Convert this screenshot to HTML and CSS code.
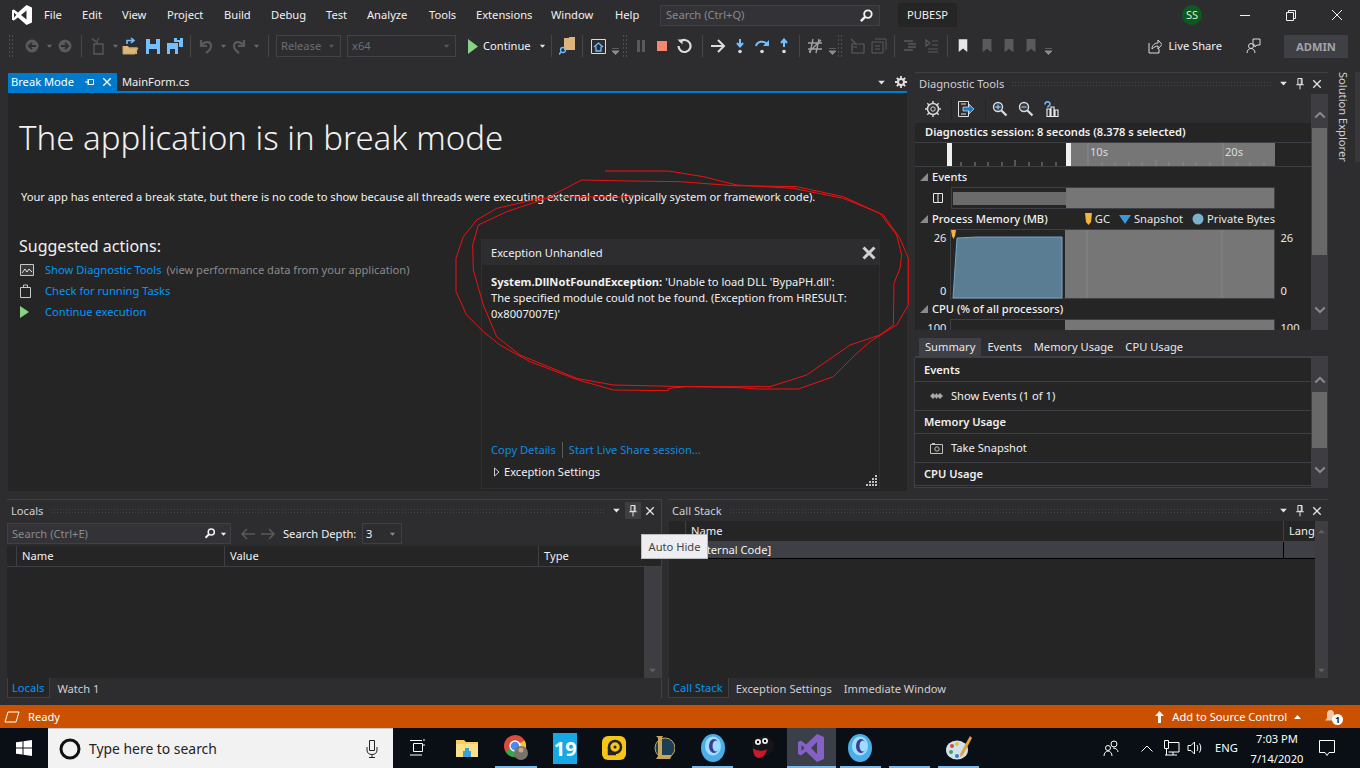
FILE: index.html
```html
<!DOCTYPE html>
<html lang="en">
<head>
    <meta charset="UTF-8">
    <title>Visual Studio - Break Mode</title>
    <link rel="stylesheet" href="styles.css">
</head>
<body>

<svg class="defs" width="0" height="0">
    <symbol id="x" viewBox="0 0 12 12"><path d="M1.5 1.5l9 9M10.5 1.5l-9 9" stroke="currentColor" stroke-width="1.6" fill="none"/></symbol>
    <symbol id="pin" viewBox="0 0 12 14"><path d="M3.5 1h5v7h-5zM1.5 8.5h9M6 9v5M7.5 1v7" stroke="currentColor" stroke-width="1.2" fill="none"/></symbol>
    <symbol id="tri" viewBox="0 0 10 6"><path d="M1 1h8L5 5.5z" fill="currentColor"/></symbol>
    <symbol id="mag" viewBox="0 0 16 16"><circle cx="9.5" cy="6.5" r="4" stroke="currentColor" stroke-width="2" fill="none"/><path d="M6.5 9.500L2 14" stroke="currentColor" stroke-width="2.6"/></symbol>
    <symbol id="step" viewBox="0 0 16 16"><circle cx="8" cy="13.5" r="1.8" fill="#dcdcdc"/><path d="M8 1v7M5 5l3 3.5L11 5" stroke="#75beff" stroke-width="2" fill="none"/></symbol>
    <symbol id="mark" viewBox="0 0 14 18"><path d="M2 1h10v15l-5-4-5 4z" fill="currentColor"/></symbol>
    <symbol id="chev" viewBox="0 0 14 9"><path d="M1.5 7.5L7 2l5.5 5.5" stroke="currentColor" stroke-width="2.4" fill="none"/></symbol>
    <symbol id="corner" viewBox="0 0 8 8"><path d="M0 8h8V0z" fill="currentColor"/></symbol>
</svg>

<header class="titlebar">
    <svg class="vs-logo" width="22" height="22" viewBox="0 0 22 22"><path d="M15.5 1L21 3.5v15L15.5 21 7 13.5 2.8 16.6 1 15.7V6.3l1.8-.9L7 8.5zM15.5 6.5L10 11l5.5 4.5zM3 8.5v5L5.4 11z" fill="#fff" fill-rule="evenodd"/></svg>
    <nav class="menu">
        <span>File</span><span>Edit</span><span>View</span><span>Project</span><span>Build</span><span>Debug</span><span>Test</span><span>Analyze</span><span>Tools</span><span>Extensions</span><span>Window</span><span>Help</span>
    </nav>
    <div class="quick-search">
        <span>Search (Ctrl+Q)</span>
        <svg width="15" height="15"><use href="#mag"/></svg>
    </div>
    <div class="sol-name">PUBESP</div>
    <div class="avatar">SS</div>
    <div class="win-btns">
        <svg width="46" height="14" viewBox="0 0 46 14"><path d="M18 7.5h10" stroke="#f1f1f1"/></svg>
        <svg width="46" height="14" viewBox="0 0 46 14"><path d="M18.5 4.5h7v8h-7zM20.5 4V2.5h7v8H26" stroke="#f1f1f1" fill="none"/></svg>
        <svg width="46" height="14" viewBox="0 0 46 14"><path d="M18 2l10 10M28 2L18 12" stroke="#f1f1f1" fill="none"/></svg>
    </div>
</header>

<div class="toolbar">
    <i class="grip"></i>
    <span class="ti m7"><svg width="16" height="16" viewBox="0 0 16 16"><circle cx="8" cy="8" r="6.5" fill="#5a5a5c"/><path d="M12 8H5M8 4.8L4.8 8 8 11.2" stroke="#2d2d30" stroke-width="1.8" fill="none"/></svg></span>
    <span class="dd"><svg width="7" height="4"><use href="#tri"/></svg></span>
    <span class="ti"><svg width="16" height="16" viewBox="0 0 16 16"><circle cx="8" cy="8" r="6.5" fill="#5a5a5c"/><path d="M4 8h7M8 4.8L11.2 8 8 11.2" stroke="#2d2d30" stroke-width="1.8" fill="none"/></svg></span>
    <i class="sep m1"></i>
    <span class="ti m1"><svg width="16" height="18" viewBox="0 0 16 18"><path d="M4 7h9v10H4zM7 7V4M4 3l2 2M2 1.5l2 2M9 1L7 4" stroke="#5a5a5c" stroke-width="1.3" fill="none"/></svg></span>
    <span class="dd"><svg width="7" height="4"><use href="#tri"/></svg></span>
    <span class="ti"><svg width="18" height="18" viewBox="0 0 18 18"><path d="M1 9h5l1 1.5h8V17H1z" fill="#dcb67a"/><path d="M1 9v8h12l3-6H7" stroke="#c8a26a" fill="none"/><path d="M5 7V3.5h6M9 1l3 2.5L9 6" stroke="#75beff" stroke-width="1.6" fill="none"/></svg></span>
    <span class="ti"><svg width="14" height="15" viewBox="0 0 14 15"><path d="M0 0h14v15H0z" fill="#75beff"/><path d="M4 0h6v5H4zM3 10h8v5H3z" fill="#2d2d30"/></svg></span>
    <span class="ti"><svg width="16" height="16" viewBox="0 0 16 16"><path d="M0 5h11v11H0z" fill="#75beff"/><path d="M3 11h5v5H3z" fill="#2d2d30"/><path d="M7 0h9v9h-4V4H7z" fill="#75beff"/><path d="M10 0h3v2h-3z" fill="#2d2d30"/></svg></span>
    <i class="sep"></i>
    <span class="ti"><svg width="16" height="18" viewBox="0 0 16 18"><path d="M3 3v6h6M3.500 8.500C6 4 13 4 13 9c0 3-2 5-5 7" stroke="#5a5a5c" stroke-width="2.200" fill="none"/></svg></span>
    <span class="dd"><svg width="7" height="4"><use href="#tri"/></svg></span>
    <span class="ti"><svg width="16" height="18" viewBox="0 0 16 18"><path d="M13 3v6H7M12.500 8.500C10 4 3 4 3 9c0 3 2 5 5 7" stroke="#5a5a5c" stroke-width="2.200" fill="none"/></svg></span>
    <span class="dd"><svg width="7" height="4"><use href="#tri"/></svg></span>
    <i class="sep m3"></i>
    <span class="combo combo-rel m3">Release<svg width="7" height="4"><use href="#tri"/></svg></span>
    <span class="combo combo-plat m6">x64<svg width="7" height="4"><use href="#tri"/></svg></span>
    <span class="ti play m7"><svg width="10" height="15" viewBox="0 0 10 15"><path d="M0 0l10 7.500L0 15z" fill="#89d185"/></svg></span>
    <span class="continue">Continue</span>
    <span class="dd m2"><svg width="7" height="4" class="lit"><use href="#tri"/></svg></span>
    <i class="sep"></i>
    <span class="ti"><svg width="16" height="18" viewBox="0 0 16 18"><path d="M5 1h5v12H5zM10 0h6v13h-6z" fill="#dcb67a"/><circle cx="4" cy="13" r="2.500" stroke="#75beff" fill="none" stroke-width="1.300"/><path d="M2 15l-2 2.500" stroke="#75beff" stroke-width="1.500"/></svg></span>
    <i class="sep"></i>
    <span class="ti"><svg width="15" height="15" viewBox="0 0 15 15"><path d="M.5.500h14v14H.500z" stroke="#dcdcdc" fill="none"/><path d="M3 8l4.500-4L12 8M5 7.500V12h5V7.500" stroke="#75beff" stroke-width="1.300" fill="none"/></svg></span>
    <span class="dd dd-bar"><svg width="7" height="7" viewBox="0 0 7 7"><path d="M0 0h7M0 3l3.500 3.500L7 3z" stroke="#8a8a8c" fill="#8a8a8c"/></svg></span>
    <i class="grip m2"></i>
    <span class="ti m2"><svg width="10" height="12"><path d="M1 0h3v12H1zM6 0h3v12H6z" fill="#5a5a5c"/></svg></span>
    <span class="ti nudge"><svg width="10" height="10"><path d="M0 0h10v10H0z" fill="#f48771"/></svg></span>
    <span class="ti"><svg width="16" height="16" viewBox="0 0 16 16"><path d="M4 4a6 6 0 1 1-1.500 4" stroke="#dcdcdc" stroke-width="2.200" fill="none"/><path d="M1.500 1.500H6.500V6.500z" fill="#dcdcdc"/></svg></span>
    <i class="sep m3"></i>
    <span class="ti"><svg width="15" height="14" viewBox="0 0 15 14"><path d="M0 7h13M7 1l6 6-6 6" stroke="#dcdcdc" stroke-width="2" fill="none"/></svg></span>
    <span class="ti"><svg width="16" height="16"><use href="#step"/></svg></span>
    <span class="ti"><svg width="16" height="16" viewBox="0 0 16 16"><circle cx="8" cy="13.500" r="1.800" fill="#dcdcdc"/><path d="M2 8a6 5 0 0 1 11-2" stroke="#75beff" stroke-width="2" fill="none"/><path d="M15 2v6H9z" fill="#75beff"/></svg></span>
    <span class="ti"><svg width="16" height="16" viewBox="0 0 16 16"><circle cx="8" cy="13.500" r="1.800" fill="#dcdcdc"/><path d="M8 9V2M5 5l3-3.500L11 5" stroke="#75beff" stroke-width="2" fill="none"/></svg></span>
    <i class="sep"></i>
    <span class="ti"><svg width="16" height="16" viewBox="0 0 16 16"><path d="M6 1L3 15M12 1L9 15M1 5h14M1 11h14M2 14L14 2" stroke="#a0a0a2" stroke-width="1.400" fill="none"/></svg></span>
    <span class="dd dd-bar"><svg width="7" height="7" viewBox="0 0 7 7"><path d="M0 0h7M0 3l3.500 3.500L7 3z" stroke="#8a8a8c" fill="#8a8a8c"/></svg></span>
    <i class="grip"></i>
    <span class="ti m3"><svg width="16" height="16" viewBox="0 0 16 16"><path d="M3 6h12v9H3zM3 9h5M2 1l5 5" stroke="#5a5a5c" fill="none" stroke-width="1.200"/></svg></span>
    <span class="ti"><svg width="16" height="16" viewBox="0 0 16 16"><path d="M4 1h11v11M1 4h11v11H1zM4 8h5M4 11h5" stroke="#5a5a5c" fill="none"/></svg></span>
    <i class="sep"></i>
    <span class="ti"><svg width="14" height="14" viewBox="0 0 14 14"><path d="M1 2h9M5 5h8M5 8h8M1 11h9" stroke="#5a5a5c" stroke-width="1.300"/></svg></span>
    <span class="ti"><svg width="14" height="14" viewBox="0 0 14 14"><path d="M1 1l4 3-4 3zM7 2h6M7 6h6M3 10h10M3 13h10" stroke="#5a5a5c" stroke-width="1.200" fill="none"/></svg></span>
    <i class="sep"></i>
    <span class="ti lit"><svg width="12" height="16"><use href="#mark"/></svg></span>
    <span class="ti m2 off"><svg width="14" height="16"><use href="#mark"/></svg></span>
    <span class="ti off"><svg width="14" height="16"><use href="#mark"/></svg></span>
    <span class="ti off"><svg width="14" height="16"><use href="#mark"/></svg></span>
    <span class="dd dd-bar"><svg width="7" height="7" viewBox="0 0 7 7"><path d="M0 0h7M0 3l3.500 3.500L7 3z" stroke="#8a8a8c" fill="#8a8a8c"/></svg></span>

    <div class="tool-right">
        <svg width="14" height="16" viewBox="0 0 14 16"><path d="M1 5v10h10v-4M4 11c0-4 3-6 6-6V2l4 4.500L10 11V8c-2 0-4 1-6 3z" stroke="#dcdcdc" fill="none"/></svg>
        <span class="live-share">Live Share</span>
        <svg class="feedback" width="15" height="16" viewBox="0 0 15 16"><path d="M7 1h7v6h-3l-2 2V7H7z" stroke="#dcdcdc" fill="none"/><circle cx="5" cy="8" r="2.500" stroke="#dcdcdc" fill="none"/><path d="M1 15c0-3 2-4.500 4-4.500S9 12 9 15" stroke="#dcdcdc" fill="none"/></svg>
        <div class="admin">ADMIN</div>
    </div>
</div>

<main class="dock">
    <div class="upper">
        <section class="doc">
            <div class="doc-tabs">
                <div class="doc-tab active">
                    <span>Break Mode</span>
                    <svg width="10" height="10" viewBox="0 0 10 10"><path d="M0 5h3M3.500 2.500v5h5v-5zM3 2v6" stroke="#fff" fill="none"/></svg>
                    <svg width="10" height="10"><use href="#x"/></svg>
                </div>
                <div class="doc-tab">MainForm.cs</div>
                <svg class="tabs-tri" width="9" height="5"><use href="#tri"/></svg>
                <svg class="tabs-gear" width="12" height="12" viewBox="0 0 12 12"><circle cx="6" cy="6" r="3" stroke="#e0e0e0" stroke-width="2" fill="none"/><path d="M6 0v2.500M6 9.500V12M0 6h2.500M9.500 6H12M1.800 1.800l1.800 1.800M8.400 8.400l1.800 1.800M10.200 1.800L8.400 3.600M3.600 8.400l-1.800 1.800" stroke="#e0e0e0" stroke-width="1.800"/></svg>
            </div>
            <div class="doc-body">
                <h1>The application is in break mode</h1>
                <p class="lead">Your app has entered a break state, but there is no code to show because all threads were executing external code (typically system or framework code).</p>
                <h2>Suggested actions:</h2>
                <ul class="actions">
                    <li><svg width="14" height="12" viewBox="0 0 14 12"><path d="M.5.500h13v11H.500z" stroke="#c8c8c8" fill="#3a3a3c"/><path d="M2 9l3-4 2 3 2-3 3 3" stroke="#e0e0e0" fill="none"/></svg><a>Show Diagnostic Tools</a><span class="hint">(view performance data from your application)</span></li>
                    <li><svg width="11" height="14" viewBox="0 0 11 14"><path d="M.5 3.500h10v10H.500zM3.500 3.500V1h4v2.500" stroke="#c8c8c8" fill="none"/></svg><a class="shift">Check for running Tasks</a></li>
                    <li><svg width="9" height="12" viewBox="0 0 9 12"><path d="M0 0l9 6-9 6z" fill="#89d185"/></svg><a class="shift2">Continue execution</a></li>
                </ul>
            </div>
            <div class="exception">
                <div class="exc-head">
                    <span>Exception Unhandled</span>
                    <svg width="14" height="14" viewBox="0 0 14 14"><path d="M1.500 1.500l11 11M12.500 1.500l-11 11" stroke="#d0d0d0" stroke-width="3"/></svg>
                </div>
                <div class="exc-msg"><b>System.DllNotFoundException:</b> 'Unable to load DLL 'BypaPH.dll':<br>The specified module could not be found. (Exception from HRESULT:<br>0x8007007E)'</div>
                <div class="exc-foot">
                    <div class="exc-links"><a>Copy Details</a><i></i><a>Start Live Share session...</a></div>
                    <div class="exc-set"><svg width="6" height="10" viewBox="0 0 6 10"><path d="M.5 1l4.500 4-4.500 4z" stroke="#d0d0d0" fill="none"/></svg>Exception Settings</div>
                </div>
                <svg class="exc-resize" width="11" height="11" viewBox="0 0 11 11"><path d="M9 0h2v2H9zM6 3h2v2H6zM9 3h2v2H9zM3 6h2v2H3zM6 6h2v2H6zM9 6h2v2H9zM0 9h2v2H0zM3 9h2v2H3zM6 9h2v2H6zM9 9h2v2H9z" fill="#c0c0c0"/></svg>
            </div>
        </section>

        <section class="diag">
            <div class="diag-top">
                <div class="pane-title">
                    <span>Diagnostic Tools</span><i class="dots"></i>
                    <svg width="9" height="5"><use href="#tri"/></svg>
                    <svg width="10" height="13"><use href="#pin"/></svg>
                    <svg width="10" height="10"><use href="#x"/></svg>
                </div>
                <div class="diag-split">
                    <div class="diag-main">
                        <div class="diag-tools">
                            <svg width="16" height="16" viewBox="0 0 16 16"><circle cx="8" cy="8" r="2.200" stroke="#d8d8d8" fill="none"/><circle cx="8" cy="8" r="5.500" stroke="#d8d8d8" stroke-width="1.500" fill="none"/><path d="M8 0v3M8 13v3M0 8h3M13 8h3M2.300 2.300l2 2M11.700 11.700l2 2M13.700 2.300l-2 2M4.300 11.700l-2 2" stroke="#d8d8d8" stroke-width="1.500"/></svg>
                            <i class="tool-sep"></i>
                            <svg width="17" height="16" viewBox="0 0 17 16"><path d="M.5.500h10v15H.500zM3 3h5M3 13h5" stroke="#e0e0e0" fill="none"/><path d="M5 6h6V3l5 5-5 5v-3H5z" fill="#1f7ac4" stroke="#e0e0e0" stroke-width=".7"/></svg>
                            <i class="tool-sep"></i>
                            <svg width="16" height="16" viewBox="0 0 16 16"><circle cx="6" cy="6" r="4.500" stroke="#dcdcdc" stroke-width="1.400" fill="#3a3a3c"/><path d="M9.500 9.500l5 5" stroke="#dcdcdc" stroke-width="2.200"/><path d="M3.500 6h5M6 3.500v5" stroke="#75beff" stroke-width="1.300"/></svg>
                            <svg class="zoom-out" width="16" height="16" viewBox="0 0 16 16"><circle cx="6" cy="6" r="4.500" stroke="#dcdcdc" stroke-width="1.400" fill="#3a3a3c"/><path d="M9.500 9.500l5 5" stroke="#dcdcdc" stroke-width="2.200"/><path d="M3.500 6h5" stroke="#75beff" stroke-width="1.300"/></svg>
                            <svg class="zoom-out" width="16" height="16" viewBox="0 0 16 16"><path d="M3 8h3v7.500H3zM7 6h3v9.500H7zM11 9h3v6.500h-3z" stroke="#e8e8e8" stroke-width="1.200" fill="none"/><path d="M1 3.500C1 0 6 0 6 3c0 2-2.500 2-2.500 3.500" stroke="#75beff" stroke-width="1.500" fill="none"/></svg>
                        </div>
                        <div class="session">Diagnostics session: 8 seconds (8.378 s selected)</div>
                        <div class="ruler">
                            <svg width="396" height="23" viewBox="0 0 396 23">
                                <rect x="151" width="209" height="23" fill="#767676"/>
                                <rect x="32" width="5" height="23" fill="#f0f0f0"/>
                                <rect x="151" width="5" height="23" fill="#f0f0f0"/>
                                <path d="M46 23v-4M60 23v-4M73 23v-4M87 23v-4M100 23v-6M114 23v-4M127 23v-4M141 23v-4M173 23v-23M187 23v-4M200 23v-4M214 23v-4M227 23v-4M241 23v-6M254 23v-4M268 23v-4M281 23v-4M295 23v-4M308 23v-23M322 23v-4M335 23v-4M349 23v-4" stroke="#888"/>
                                <text x="175" y="13" class="ruler-txt">10s</text>
                                <text x="310" y="13" class="ruler-txt">20s</text>
                            </svg>
                        </div>
                        <div class="diag-head first"><svg width="8" height="8"><use href="#corner"/></svg><b>Events</b></div>
                        <div class="diag-row events-row">
                            <svg width="10" height="10" viewBox="0 0 10 10"><path d="M.500.500h9v9h-9zM5 0v10" stroke="#e8e8e8" fill="none"/></svg>
                            <div class="events-graph"><div></div></div>
                        </div>
                        <div class="diag-head mem">
                            <svg width="8" height="8"><use href="#corner"/></svg><b>Process Memory (MB)</b>
                            <span class="legend gc"><svg width="7" height="12" viewBox="0 0 7 12"><path d="M0 0h7l-1 9-2.500 3L1 9z" fill="#f2b53c"/></svg>GC</span>
                            <span class="legend snap"><svg width="12" height="9" viewBox="0 0 12 9"><path d="M0 0h12L6 9z" fill="#3a96dd"/></svg>Snapshot</span>
                            <span class="legend priv"><svg width="12" height="12"><circle cx="6" cy="6" r="5.500" fill="#7cb1cc"/></svg>Private Bytes</span>
                        </div>
                        <div class="diag-row chart-row">
                            <div class="axis"><span>26</span><span>0</span></div>
                            <svg width="325" height="70" viewBox="0 0 325 70" class="chart">
                                <rect x=".5" y=".5" width="324" height="69" fill="#767676" stroke="#3f3f46"/>
                                <rect x="1" y="1" width="114" height="68" fill="#252526"/>
                                <path d="M3 69L7 9l20-1h85v61z" fill="#5b7d94" stroke="#74a6c4"/>
                                <path d="M1 1h5l-1 6-1.500 3L2 7z" fill="#f2b53c"/>
                                <path d="M137 1v68M272 1v68" stroke="#848484"/>
                            </svg>
                            <div class="axis right"><span>26</span><span>0</span></div>
                        </div>
                        <div class="diag-head cpu"><svg width="8" height="8"><use href="#corner"/></svg><b>CPU (% of all processors)</b></div>
                        <div class="diag-row chart-row cut">
                            <div class="axis"><span>100</span></div>
                            <svg width="325" height="20" viewBox="0 0 325 20" class="chart">
                                <rect x=".5" y=".5" width="324" height="19" fill="#767676" stroke="#3f3f46"/>
                                <rect x="1" y="1" width="114" height="19" fill="#252526"/>
                            </svg>
                            <div class="axis right"><span>100</span></div>
                        </div>
                    </div>
                    <div class="vscroll top-scroll">
                        <svg width="12" height="8"><use href="#chev"/></svg>
                        <div class="thumb"></div>
                        <svg class="down" width="12" height="8"><use href="#chev"/></svg>
                    </div>
                </div>
            </div>
            <div class="diag-tabs">
                <span class="active">Summary</span><span>Events</span><span>Memory Usage</span><span>CPU Usage</span>
            </div>
            <div class="diag-bottom">
                <div class="summary">
                    <div class="sum-head"><b>Events</b></div>
                    <div class="sum-item"><svg width="13" height="6" viewBox="0 0 13 6"><path d="M0 3l3-3 2 2 1.500-2L8 2l2-2 3 3-3 3-2-2-1.500 2L5 4 3 6z" fill="#a8a8a8"/></svg>Show Events (1 of 1)</div>
                    <div class="sum-head"><b>Memory Usage</b></div>
                    <div class="sum-item"><svg width="13" height="11" viewBox="0 0 13 11"><path d="M.500 1.500h12v9H.500z" stroke="#c0c0c0" fill="none"/><circle cx="7" cy="6" r="2.200" stroke="#c0c0c0" fill="none"/><path d="M2 0h3v1H2z" fill="#c0c0c0"/></svg>Take Snapshot</div>
                    <div class="sum-head"><b>CPU Usage</b></div>
                </div>
                <div class="vscroll low-scroll">
                    <svg width="12" height="8"><use href="#chev"/></svg>
                    <div class="thumb"></div>
                    <svg class="down" width="12" height="8"><use href="#chev"/></svg>
                </div>
            </div>
        </section>

        <aside class="sidetab"><span>Solution Explorer</span><i></i></aside>
    </div>

    <div class="lower">
        <section class="tool-pane locals">
            <div class="pane-title">
                <span>Locals</span><i class="dots"></i>
                <svg width="9" height="5"><use href="#tri"/></svg>
                <span class="pin-hover"><svg width="10" height="13"><use href="#pin"/></svg></span>
                <svg width="10" height="10"><use href="#x"/></svg>
            </div>
            <div class="locals-bar">
                <div class="loc-search">
                    <span>Search (Ctrl+E)</span>
                    <svg width="14" height="14"><use href="#mag" transform="scale(.875)"/></svg>
                    <svg class="loc-dd" width="7" height="4"><use href="#tri"/></svg>
                </div>
                <svg class="nav" width="16" height="12" viewBox="0 0 16 12"><path d="M15 6H2M7 1L2 6l5 5" stroke="#5a5a5c" stroke-width="1.500" fill="none"/></svg>
                <svg class="nav" width="16" height="12" viewBox="0 0 16 12"><path d="M1 6h13M9 1l5 5-5 5" stroke="#5a5a5c" stroke-width="1.500" fill="none"/></svg>
                <span class="depth-label">Search Depth:</span>
                <span class="depth">3<svg width="7" height="4"><use href="#tri"/></svg></span>
            </div>
            <div class="grid-head loc-cols">
                <span class="gutter"></span><span>Name</span><span>Value</span><span>Type</span>
            </div>
            <div class="grid-rest">
                <div class="grid-fill"></div>
                <div class="thin-scroll"><svg class="down dim" width="9" height="5"><use href="#tri"/></svg></div>
            </div>
            <div class="pane-tabs"><span class="active">Locals</span><span>Watch 1</span></div>
        </section>

        <section class="tool-pane stack">
            <div class="pane-title">
                <span>Call Stack</span><i class="dots"></i>
                <svg width="9" height="5"><use href="#tri"/></svg>
                <svg width="10" height="13"><use href="#pin"/></svg>
                <svg width="10" height="10"><use href="#x"/></svg>
            </div>
            <div class="stack-body">
                <div class="grid-fill">
                    <div class="grid-head stack-cols"><span class="gutter"></span><span>Name</span><span>Lang</span></div>
                    <div class="stack-row stack-cols"><span class="gutter"></span><span class="ext-name">[External Code]</span><span></span></div>
                </div>
                <div class="thin-scroll">
                    <svg class="dim up" width="9" height="5"><use href="#tri"/></svg>
                    <svg class="down dim" width="9" height="5"><use href="#tri"/></svg>
                </div>
            </div>
            <div class="pane-tabs"><span class="active">Call Stack</span><span>Exception Settings</span><span>Immediate Window</span></div>
        </section>
    </div>
</main>

<footer class="statusbar">
    <svg width="16" height="12" viewBox="0 0 16 12"><path d="M4 1h11l-3 10H1z" stroke="#fff" fill="none"/></svg>
    <span class="ready">Ready</span>
    <div class="status-right">
        <svg width="9" height="12" viewBox="0 0 9 12"><path d="M4.500 0L9 5H6v7H3V5H0z" fill="#f0f0f0"/></svg>
        <span class="src">Add to Source Control</span>
        <svg class="src-tri" width="7" height="4" viewBox="0 0 7 4"><path d="M3.500 0L7 4H0z" fill="#fff"/></svg>
        <span class="bell"><svg width="13" height="14" viewBox="0 0 13 14"><path d="M6.500 0C9 0 10 2 10 4v4l2 2.500H1L3 8V4c0-2 1-4 3.500-4z" fill="#e8c8b0"/></svg><b>1</b></span>
    </div>
</footer>

<div class="taskbar">
    <svg class="win" width="16" height="16" viewBox="0 0 16 16"><path d="M0 2.300L6.500 1.400v6.100H0zM7.500 1.300L16 0v7.500H7.500zM0 8.500h6.500v6.100L0 13.700zM7.500 8.500H16V16l-8.500-1.300z" fill="#fff"/></svg>
    <div class="task-search">
        <svg width="22" height="22" viewBox="0 0 22 22"><circle cx="11" cy="11" r="9" stroke="#111" stroke-width="3" fill="none"/></svg>
        <span>Type here to search</span>
        <svg class="mic" width="12" height="18" viewBox="0 0 12 18"><path d="M3.500.500h5v10h-5zM1 7v3c0 3 2 4.500 5 4.500s5-1.500 5-4.500V7M6 15v3M3 17.500h6" stroke="#222" fill="none"/></svg>
    </div>
    <div class="task-icons">
        <span class="app"><svg width="16" height="18" viewBox="0 0 16 18"><path d="M3.500 4.500h9v8h-9zM0 1.500h12M0 16h12M14 0v2M14 5v2" stroke="#fff" fill="none"/></svg></span>
        <span class="app"><svg width="22" height="20" viewBox="0 0 22 20"><path d="M0 2h8l2 2h12v15H0z" fill="#f4cf5f"/><path d="M0 6h22v13H0z" fill="#fbe08a"/><path d="M7 13h8v6H7z" fill="#3aa0d8"/><path d="M9 10h4v3H9z" fill="#3aa0d8"/></svg></span>
        <span class="app open"><svg width="26" height="28" viewBox="0 0 26 28"><circle cx="12" cy="12" r="11" fill="#dd4b3e"/><path d="M12 12L2.500 17.500A11 11 0 0 0 14 23z" fill="#2fa84f"/><path d="M12 12l9.500-5.500A11 11 0 0 1 14 23z" fill="#f7c52d"/><circle cx="12" cy="12" r="5" fill="#4a8bf5" stroke="#fff" stroke-width="1.500"/><circle cx="18" cy="19" r="7" fill="#77736c"/><circle cx="18" cy="16" r="2.500" fill="#c9a489"/></svg></span>
        <span class="app"><span class="nineteen">19</span></span>
        <span class="app"><svg width="24" height="24" viewBox="0 0 24 24"><rect width="24" height="24" rx="6" fill="#f5c518"/><circle cx="13" cy="11" r="6" stroke="#222" stroke-width="2.500" fill="none"/><path d="M7 11v7h7" stroke="#222" stroke-width="2.500" fill="none"/><circle cx="13" cy="11" r="1.500" fill="#222"/></svg></span>
        <span class="app"><svg width="22" height="28" viewBox="0 0 22 28"><circle cx="12" cy="14" r="10" fill="#1c3f55" stroke="#c9a65c"/><path d="M3 2h7l-1 2v17h10l-2 4H3l2-3V4z" fill="#c8a45c"/></svg></span>
        <span class="app open"><svg width="26" height="28" viewBox="0 0 26 28"><ellipse cx="13" cy="14" rx="12" ry="14" fill="#4aaee8"/><ellipse cx="13" cy="12" rx="8" ry="9.500" fill="#9fdcff"/><ellipse cx="14" cy="12" rx="5" ry="7" fill="#3a3d8f"/><ellipse cx="16" cy="12" rx="3.500" ry="5.500" fill="#9fdcff"/></svg></span>
        <span class="app"><svg width="24" height="26" viewBox="0 0 24 26"><ellipse cx="13" cy="11" rx="11" ry="10" fill="#15151a"/><circle cx="8" cy="7" r="3" fill="#eee"/><circle cx="15" cy="6" r="3" fill="#eee"/><circle cx="8" cy="7" r="1.200" fill="#000"/><circle cx="15" cy="6" r="1.200" fill="#000"/><path d="M3 13c3 3 10 4 14 1-1 5-4 9-8 9-4 0-6-4-6-10z" fill="#c8182a"/></svg></span>
        <span class="app current"><svg width="26" height="28" viewBox="0 0 26 28"><path d="M19 0l7 3v22l-7 3L8 17.500 3 21.500 0 20V8l3-1.500 5 4zM19 8l-6 6 6 6zM3.500 11v6l3-3z" fill="#8661c5" fill-rule="evenodd"/></svg></span>
        <span class="app open"><svg width="26" height="28" viewBox="0 0 26 28"><ellipse cx="13" cy="14" rx="12" ry="14" fill="#4aaee8"/><ellipse cx="13" cy="12" rx="8" ry="9.500" fill="#9fdcff"/><ellipse cx="14" cy="12" rx="5" ry="7" fill="#3a3d8f"/><ellipse cx="16" cy="12" rx="3.500" ry="5.500" fill="#9fdcff"/></svg></span>
        <span class="app open"></span>
        <span class="app open"><svg width="26" height="26" viewBox="0 0 26 26"><ellipse cx="11" cy="15" rx="11" ry="9.500" fill="#cfe3ee"/><circle cx="6" cy="11" r="2" fill="#d84a3a"/><circle cx="11" cy="9" r="2" fill="#e8c040"/><circle cx="5" cy="17" r="2" fill="#46a050"/><circle cx="11" cy="21" r="2" fill="#3a78c8"/><path d="M24 1l2 2-9 17-3 2 .5-4z" fill="#e8a040"/></svg></span>
    </div>
    <div class="tray">
        <svg width="16" height="16" viewBox="0 0 16 16"><circle cx="11" cy="4" r="3" stroke="#fff" fill="none"/><circle cx="5" cy="8" r="2.500" stroke="#fff" fill="none"/><path d="M1 16c0-3 2-5 4-5s4 2 4 5M10 8c3 0 5 2 5 4" stroke="#fff" fill="none"/></svg>
        <svg class="t-chev" width="12" height="7" viewBox="0 0 12 7"><path d="M.500 6.500L6 1l5.500 5.500" stroke="#fff" fill="none"/></svg>
        <svg class="t-net" width="16" height="16" viewBox="0 0 16 16"><path d="M4.500 2.500H15V12H4.500M.500.500h4v8h-4zM2.500 8.500V15M1 15h12M9 12v3" stroke="#fff" fill="none"/></svg>
        <svg class="t-vol" width="16" height="16" viewBox="0 0 16 16"><path d="M1 5.500h3L7.500 2v12L4 10.500H1zM10 5c1 2 1 4 0 6M12.500 3.500c1.700 3 1.700 6 0 9" stroke="#fff" fill="none"/></svg>
        <span class="lang">ENG</span>
        <div class="clock"><span>7:03 PM</span><span>7/14/2020</span></div>
        <svg class="t-note" width="16" height="17" viewBox="0 0 16 17"><path d="M.500.500h15v12H10l-2 3-2-3H.500z" stroke="#fff" fill="none"/></svg>
    </div>
</div>

<svg class="scribble" width="470" height="330" viewBox="0 0 1410 990">
    <path d="M555 90L520 96 400 95 270 100 140 130 80 165 40 215 18 280 18 380 50 450 100 500 150 540 240 590 385 645 490 675 655 677 655 670 710 665 870 668 920 672 1045 672 1150 635 1215 570 1260 530 1340 480 1375 420 1375 280 1350 220 1300 150 1180 95 1040 65 850 62 690 50 540 48 395 45 290 100"/>
    <path d="M465 18L655 18 760 35 860 60 1030 70 1180 100 1290 145 1340 210 1355 270 1350 310 1332 355 1330 480 1290 510 1200 540 1150 575 1070 630 960 665 710 665 490 660 380 640 210 570 140 515 100 420 70 315 68 240 85 180 170 140 290 100"/>
</svg>

<div class="tooltip">Auto Hide</div>

</body>
</html>
```

FILE: styles.css
```css
* {
    box-sizing: border-box;
}
html, body {
    margin: 0;
    height: 768px;
    overflow: hidden;
}
body {
    position: relative;
    width: 1360px;
    display: flex;
    flex-direction: column;
    background-color: #2d2d30;
    color: #f1f1f1;
    font-family: "Noto Sans", "Open Sans", sans-serif;
    font-size: 11.15px;
    line-height: 16px;
}
svg {
    flex: none;
    display: block;
}
i {
    font-style: normal;
}
a {
    color: #0097fb;
}
.defs {
    position: absolute;
}

/* title bar */
.titlebar {
    height: 30px;
    flex: none;
    display: flex;
    align-items: center;
}
.vs-logo {
    margin-left: 11px;
}
.menu {
    display: flex;
    margin-left: 11px;
    width: 605px;
}
.menu span:nth-child(1) { width: 38px; }
.menu span:nth-child(2) { width: 40px; }
.menu span:nth-child(3) { width: 45px; }
.menu span:nth-child(4) { width: 57px; }
.menu span:nth-child(5) { width: 47px; }
.menu span:nth-child(6) { width: 55px; }
.menu span:nth-child(7) { width: 41px; }
.menu span:nth-child(8) { width: 62px; }
.menu span:nth-child(9) { width: 47px; }
.menu span:nth-child(10) { width: 75px; }
.menu span:nth-child(11) { width: 64px; }
.quick-search {
    width: 220px;
    height: 21px;
    margin-left: 11px;
    display: flex;
    align-items: center;
    justify-content: space-between;
    padding: 0 5px;
    border: 1px solid #3f3f46;
    background-color: #333337;
    color: #8a8a8c;
}
.quick-search svg {
    color: #f1f1f1;
}
.sol-name {
    width: 59px;
    height: 24px;
    margin-left: 18px;
    background-color: #252526;
    text-align: center;
    line-height: 24px;
}
.avatar {
    width: 20px;
    height: 20px;
    margin-left: 225px;
    border-radius: 50%;
    background-color: #0b5a1e;
    color: #d8efd8;
    text-align: center;
    line-height: 20px;
}
.win-btns {
    display: flex;
    margin-left: 20px;
}

/* command toolbar */
.toolbar {
    height: 32px;
    flex: none;
    display: flex;
    align-items: center;
    padding: 0 12px 0 8px;
}
.grip {
    flex: none;
    width: 6px;
    height: 24px;
    background-image: radial-gradient(#4e4e52 1px, transparent 1px);
    background-size: 3px 4px;
}
.ti {
    flex: none;
    width: 22px;
    height: 20px;
    display: flex;
    align-items: center;
    justify-content: center;
}
.dd {
    flex: none;
    width: 12px;
    margin-right: -1px;
    display: flex;
    justify-content: center;
    color: #6a6a6c;
}
.dd-bar {
    padding-top: 10px;
}
.sep {
    flex: none;
    width: 1px;
    height: 22px;
    margin: 0 4px;
    background-color: #46464a;
}
.m1 { margin-left: 1px; }
.m2 { margin-left: 2px; }
.m3 { margin-left: 3px; }
.m6 { margin-left: 6px; }
.m7 { margin-left: 7px; }
.sep.m1 { margin-left: 5px; }
.sep.m3 { margin-left: 7px; }
.nudge { margin-left: -1px; }
.lit { color: #e6e6e6; }
.off { color: #5a5a5c; }
.combo {
    flex: none;
    height: 22px;
    display: flex;
    align-items: center;
    justify-content: space-between;
    padding: 0 5px 0 4px;
    border: 1px solid #434346;
    color: #6d6d70;
}
.combo svg { color: #5a5a5c; }
.combo-rel { width: 65px; }
.combo-plat { width: 109px; }
.play { width: 20px; }
.continue {
    flex: none;
    width: 51px;
    color: #f1f1f1;
}
.tool-right {
    margin-left: auto;
    display: flex;
    align-items: center;
}
.live-share {
    margin-left: 7px;
}
.feedback {
    margin-left: 24px;
}
.admin {
    width: 64px;
    height: 23px;
    margin-left: 23px;
    background-color: #3f3f46;
    color: #a4a4a6;
    font-weight: 700;
    text-align: center;
    line-height: 23px;
}

/* docking area */
.dock {
    flex: 1;
    padding-top: 10px;
}
.upper {
    height: 419px;
    display: flex;
}
.doc {
    position: relative;
    flex: none;
    width: 899px;
    margin-left: 8px;
    display: flex;
    flex-direction: column;
}
.doc-tabs {
    height: 21px;
    flex: none;
    display: flex;
    align-items: flex-start;
    border-bottom: 2px solid #007acc;
    padding-top: 1px;
}
.doc-tab {
    height: 18px;
    padding: 0 5px;
    line-height: 18px;
}
.doc-tab.active {
    width: 109px;
    padding: 0 5px 0 3px;
    display: flex;
    align-items: center;
    background-color: #007acc;
    color: #fff;
}
.doc-tab.active span {
    width: 73px;
}
.doc-tab.active svg:last-child {
    margin-left: 7px;
}
.doc-tab.active svg:nth-child(2) {
    margin-left: 1px;
}
.tabs-tri {
    margin: 7px 0 0 auto;
    color: #e0e0e0;
}
.tabs-gear {
    margin: 3px 0 0 9px;
}
.doc-body {
    flex: 1;
    padding: 23px 11px 0;
    background-color: #252526;
}
h1 {
    margin: 0;
    font-size: 33px;
    font-weight: 300;
    line-height: 44px;
}
.lead {
    margin: 29px 0 0 2px;
}
h2 {
    margin: 29px 0 0;
    font-size: 16px;
    font-weight: 400;
    line-height: 24px;
}
.actions {
    margin: 1px 0 0;
    padding: 0;
    list-style: none;
}
.actions li {
    height: 21px;
    display: flex;
    align-items: center;
    padding-left: 1px;
}
.actions a {
    margin-left: 11px;
}
.actions .shift {
    margin-left: 14px;
}
.actions .shift2 {
    margin-left: 16px;
}
.hint {
    margin-left: 5px;
    color: #8a8a8c;
}

/* exception popup */
.exception {
    position: absolute;
    left: 473px;
    top: 167px;
    width: 399px;
    height: 250px;
    display: flex;
    flex-direction: column;
    border: 1px solid #2f2f33;
    background-color: #252526;
}
.exc-head {
    height: 25px;
    flex: none;
    display: flex;
    align-items: center;
    justify-content: space-between;
    padding: 0 3px 0 9px;
    background-color: #2d2d30;
}
.exc-msg {
    margin-top: 9px;
    padding-left: 9px;
    color: #f1f1f1;
    white-space: nowrap;
}
.exc-foot {
    margin-top: auto;
    padding: 0 0 8px 9px;
}
.exc-links {
    display: flex;
    align-items: center;
    height: 16px;
}
.exc-links i {
    width: 1px;
    height: 16px;
    margin: 0 6px;
    background-color: #5a5a5c;
}
.exc-links a {
    color: #0e8ae0;
}
.exc-set {
    display: flex;
    align-items: center;
    gap: 4px;
    margin: 6px 0 0 3px;
}
.exc-resize {
    position: absolute;
    right: 2px;
    bottom: 2px;
}

/* diagnostic tools */
.diag {
    flex: none;
    width: 413px;
    margin-left: 8px;
    display: flex;
    flex-direction: column;
}
.diag-top {
    height: 258px;
    flex: none;
    display: flex;
    flex-direction: column;
    overflow: hidden;
}
.pane-title {
    height: 22px;
    flex: none;
    display: flex;
    align-items: center;
    padding: 0 6px 0 4px;
    gap: 7px;
    border-top: 1px solid #3f3f46;
    color: #d0d0d0;
}
.pane-title svg {
    color: #e6e6e6;
}
.dots {
    flex: 1;
    height: 5px;
    margin-right: 1px;
    background-image: radial-gradient(#46464a .8px, transparent 1px);
    background-size: 3px 3px;
}
.diag-split {
    flex: 1;
    display: flex;
    min-height: 0;
}
.diag-main {
    width: 396px;
    flex: none;
    background-color: #252526;
}
.diag-tools {
    height: 29px;
    display: flex;
    align-items: center;
    padding-left: 10px;
    background-color: #2d2d30;
}
.tool-sep {
    width: 1px;
    height: 22px;
    margin: 0 6px 0 10px;
    background-color: #252526;
}
.zoom-out {
    margin-left: 10px;
}
.session {
    height: 19px;
    padding-left: 10px;
    font-weight: 600;
    line-height: 18px;
}
.ruler {
    height: 24px;
    border-top: 1px solid #3f3f46;
}
.ruler-txt {
    fill: #dcdcdc;
    font-family: "Noto Sans", sans-serif;
    font-size: 11.15px;
}
.diag-head {
    display: flex;
    align-items: center;
    height: 20px;
    padding-left: 5px;
    color: #8a8a8c;
}
.diag-head b {
    margin-left: 4px;
    color: #f1f1f1;
    font-weight: 500;
}
.diag-head.first {
    height: 21px;
    border-top: 1px solid #3f3f46;
}
.diag-head.mem {
    padding-right: 36px;
}
.legend {
    display: flex;
    align-items: center;
    gap: 3px;
    color: #e8e8e8;
}
.gc { margin-left: auto; }
.snap { margin-left: 9px; }
.priv { margin-left: 9px; }
.diag-row {
    display: flex;
}
.events-row {
    height: 22px;
    align-items: center;
    padding-left: 18px;
}
.events-graph {
    width: 324px;
    height: 22px;
    margin-left: 8px;
    padding: 4px 0 3px 1px;
    border: 1px solid #3f3f46;
    background-color: #767676;
    background-image: linear-gradient(#252526, #252526);
    background-repeat: no-repeat;
    background-size: 114px 100%;
}
.events-graph div {
    width: 113px;
    height: 100%;
    background-color: #6b6b6b;
}
.chart-row {
    height: 70px;
}
.chart-row.cut {
    height: 20px;
}
.axis {
    width: 36px;
    display: flex;
    flex-direction: column;
    justify-content: space-between;
    align-items: flex-end;
    padding: 1px 4px 0 0;
    color: #e8e8e8;
}
.axis.right {
    align-items: flex-start;
    padding-left: 5px;
}
.vscroll {
    width: 17px;
    flex: none;
    display: flex;
    flex-direction: column;
    align-items: center;
    background-color: #3e3e42;
    color: #8a8a8c;
}
.thumb {
    width: 15px;
    background-color: #686868;
}
.top-scroll svg:first-child {
    margin-top: 17px;
}
.top-scroll .thumb {
    height: 127px;
    margin-top: 9px;
}
.top-scroll .down {
    margin-top: 51px;
    transform: rotate(180deg);
}
.diag-tabs {
    height: 24px;
    margin-top: 4px;
    flex: none;
    display: flex;
    align-items: flex-end;
    padding-left: 4px;
    border-bottom: 2px solid #3f3f46;
}
.diag-tabs span {
    height: 18px;
    padding: 0 6px;
    line-height: 18px;
    color: #e8e8e8;
}
.diag-tabs .active {
    background-color: #3f3f46;
}
.diag-bottom {
    height: 130px;
    flex: none;
    display: flex;
    margin-left: -1px;
    border-left: 1px solid #3f3f46;
}
.summary {
    flex: 1;
    background-color: #252526;
    border-bottom: 1px solid #3f3f46;
}
.sum-head {
    height: 23px;
    padding-left: 9px;
    display: flex;
    align-items: center;
    border-bottom: 1px solid #3f3f46;
}
.sum-head:first-child {
    height: 24px;
}
.sum-head b {
    font-weight: 600;
}
.sum-item {
    height: 29px;
    padding-left: 15px;
    display: flex;
    align-items: center;
    gap: 8px;
    border-bottom: 1px solid #3f3f46;
}
.low-scroll svg:first-child {
    margin-top: 18px;
}
.low-scroll .thumb {
    height: 56px;
    margin-top: 8px;
}
.low-scroll .down {
    margin-top: 18px;
    transform: rotate(180deg);
}
.sidetab {
    flex: none;
    width: 32px;
    position: relative;
}
.sidetab span {
    display: block;
    writing-mode: vertical-rl;
    margin-left: 7px;
    white-space: nowrap;
    color: #d0d0d0;
    line-height: 16px;
}
.sidetab i {
    position: absolute;
    right: 0;
    top: 0;
    width: 5px;
    height: 90px;
    background-color: #38383b;
}

/* locals and call stack */
.lower {
    height: 199px;
    margin-top: 8px;
    display: flex;
}
.tool-pane {
    flex: none;
    display: flex;
    flex-direction: column;
    border-right: 1px solid #3f3f46;
}
.locals {
    width: 655px;
    margin-left: 7px;
}
.stack {
    width: 660px;
    margin-left: 6px;
    border-right: 0;
}
.locals-bar {
    height: 25px;
    flex: none;
    display: flex;
    align-items: center;
}
.loc-search {
    width: 224px;
    height: 21px;
    display: flex;
    align-items: center;
    padding-left: 4px;
    border: 1px solid #3f3f46;
    background-color: #333337;
    color: #8a8a8c;
}
.loc-search span {
    flex: 1;
}
.loc-search svg {
    color: #f1f1f1;
}
.loc-dd {
    margin: 0 3px 0 2px;
}
.nav {
    margin-left: 9px;
}
.nav + .nav {
    margin-left: 4px;
}
.depth-label {
    margin-left: 7px;
    width: 79px;
}
.depth {
    width: 40px;
    height: 21px;
    display: flex;
    align-items: center;
    justify-content: space-between;
    padding: 0 5px 0 3px;
    border: 1px solid #3f3f46;
}
.depth svg {
    color: #8a8a8c;
}
.pin-hover {
    margin: 0 -3px;
    padding: 2px 3px;
    background-color: #3e3e42;
}
.grid-head {
    height: 21px;
    flex: none;
    display: grid;
    align-items: center;
    background-color: #252526;
    border-bottom: 1px solid #3f3f46;
}
.grid-head span {
    height: 100%;
    padding-left: 5px;
    border-left: 1px solid #3f3f46;
    line-height: 20px;
}
.grid-head .gutter {
    border-left: 0;
    padding: 0;
}
.loc-cols {
    grid-template-columns: 9px 208px 314px 1fr;
}
.stack-cols {
    grid-template-columns: 16px 598px 1fr;
}
.grid-rest {
    flex: 1;
    display: flex;
    min-height: 0;
}
.grid-fill {
    flex: 1;
    background-color: #252526;
}
.thin-scroll {
    width: 17px;
    display: flex;
    flex-direction: column;
    align-items: center;
    background-color: #3e3e42;
    color: #5f5f62;
}
.thin-scroll .down {
    margin-top: auto;
    margin-bottom: 5px;
}
.thin-scroll .up {
    margin-top: 8px;
    transform: rotate(180deg);
}
.pane-tabs {
    height: 20px;
    flex: none;
    display: flex;
    align-items: center;
    color: #d0d0d0;
}
.pane-tabs span {
    padding: 0 5px;
    margin-right: 2px;
    line-height: 19px;
}
.pane-tabs .active {
    height: 20px;
    padding: 0 5px 0 4px;
    margin-right: 2px;
    color: #0097fb;
    background-color: #252526;
    border: 1px solid #3f3f46;
    border-top: 0;
}
.stack-body {
    flex: 1;
    display: flex;
    min-height: 0;
    border-left: 1px solid #2d2d30;
}
.stack-row {
    height: 17px;
    display: grid;
    background-color: #3f3f46;
    border-bottom: 1px solid #000;
    line-height: 16px;
}
.ext-name {
    padding-left: 6px;
}
.stack-row span:nth-child(3) {
    border-left: 1px solid #000;
}

/* status and task bar */
.statusbar {
    height: 23px;
    flex: none;
    display: flex;
    align-items: center;
    padding-left: 4px;
    background-color: #ca5100;
    color: #fff;
}
.ready {
    margin-left: 8px;
}
.status-right {
    margin-left: auto;
    display: flex;
    align-items: center;
}
.src {
    margin-left: 8px;
}
.src-tri {
    margin-left: 7px;
}
.bell {
    position: relative;
    margin: 0 23px;
}
.bell b {
    position: absolute;
    left: 8px;
    top: 4px;
    width: 11px;
    height: 11px;
    border-radius: 50%;
    background-color: #fff;
    color: #222;
    font-size: 9px;
    line-height: 11px;
    text-align: center;
}
.taskbar {
    height: 40px;
    flex: none;
    display: flex;
    align-items: center;
    background-color: #0a0f16;
}
.win {
    margin-left: 16px;
}
.task-search {
    width: 345px;
    height: 40px;
    margin-left: 16px;
    display: flex;
    align-items: center;
    padding-left: 11px;
    border-top: 1px solid #c8c8c8;
    background-color: #f2f2f2;
    color: #222;
    font-size: 13.9px;
}
.task-search span {
    margin-left: 8px;
}
.mic {
    margin-left: auto;
    margin-right: 15px;
}
.task-icons {
    display: flex;
}
.app {
    position: relative;
    width: 49.200px;
    height: 40px;
    display: flex;
    align-items: center;
    justify-content: center;
}
.app.open::after,
.app.current::after {
    content: "";
    position: absolute;
    left: 4px;
    right: 4px;
    bottom: 0;
    height: 2px;
    background-color: #76b9ed;
}
.app.current {
    background-color: #3b3f47;
}
.app.current::after {
    left: 0;
    right: 0;
}
.nineteen {
    width: 24px;
    height: 31px;
    background-color: #16a9e5;
    color: #fff;
    font-size: 20px;
    font-weight: 700;
    line-height: 31px;
    text-align: center;
}
.tray {
    margin-left: auto;
    display: flex;
    align-items: center;
    color: #fff;
    padding-right: 25px;
}
.t-chev { margin-left: 22px; }
.t-net { margin-left: 11px; }
.t-vol { margin-left: 7px; }
.lang {
    margin-left: 12px;
    width: 22px;
}
.clock {
    width: 74px;
    margin-left: 3px;
    padding-top: 1px;
    display: flex;
    flex-direction: column;
    align-items: center;
    line-height: 20px;
}
.t-note {
    margin-left: 5px;
}

/* overlays */
.scribble {
    position: absolute;
    left: 450px;
    top: 165px;
    fill: none;
    stroke: #f01010;
    stroke-width: 3;
    pointer-events: none;
}
.tooltip {
    position: absolute;
    left: 641px;
    top: 534px;
    width: 67px;
    height: 25px;
    background-color: #eeeef2;
    border: 1px solid #bdbdbd;
    color: #444;
    text-align: center;
    line-height: 23px;
}
```
